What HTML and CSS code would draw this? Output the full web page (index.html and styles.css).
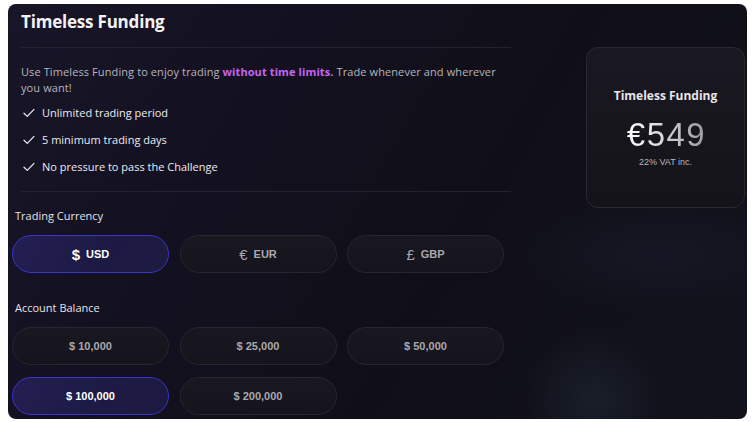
FILE: index.html
```html
<!DOCTYPE html>
<html lang="en">
<head>
<meta charset="utf-8">
<title>Timeless Funding</title>
<link rel="stylesheet" href="styles.css">
</head>
<body>
<div class="panel">
  <div class="left">
    <div class="intro">
      <h1 class="title">Timeless Funding</h1>
      <div class="divider"></div>
      <p class="desc">Use Timeless Funding to enjoy trading <strong class="hl">without time limits.</strong> Trade whenever and wherever you want!</p>
      <ul class="checks">
        <li><svg class="tick" viewBox="0 0 12 10" width="12" height="10"><path d="M1 5.2 L4.3 8.4 L11 1.4" fill="none" stroke="#e6e6ea" stroke-width="1.3" stroke-linecap="round" stroke-linejoin="round"/></svg>Unlimited trading period</li>
        <li><svg class="tick" viewBox="0 0 12 10" width="12" height="10"><path d="M1 5.2 L4.3 8.4 L11 1.4" fill="none" stroke="#e6e6ea" stroke-width="1.3" stroke-linecap="round" stroke-linejoin="round"/></svg>5 minimum trading days</li>
        <li><svg class="tick" viewBox="0 0 12 10" width="12" height="10"><path d="M1 5.2 L4.3 8.4 L11 1.4" fill="none" stroke="#e6e6ea" stroke-width="1.3" stroke-linecap="round" stroke-linejoin="round"/></svg>No pressure to pass the Challenge</li>
      </ul>
      <div class="divider divider-low"></div>
    </div>
    <div class="label">Trading Currency</div>
    <div class="opts">
      <div class="opt sel"><span class="sym">$</span>USD</div>
      <div class="opt"><span class="sym">€</span>EUR</div>
      <div class="opt"><span class="sym">£</span>GBP</div>
    </div>
    <div class="label label-gap">Account Balance</div>
    <div class="opts">
      <div class="opt">$ 10,000</div>
      <div class="opt">$ 25,000</div>
      <div class="opt">$ 50,000</div>
      <div class="opt sel">$ 100,000</div>
      <div class="opt">$ 200,000</div>
    </div>
  </div>
  <div class="right">
    <div class="card">
      <div class="card-title">Timeless Funding</div>
      <div class="price">€549</div>
      <div class="vat">22% VAT inc.</div>
    </div>
  </div>
</div>
</body>
</html>
```
FILE: styles.css
```css
* { box-sizing: border-box; }
html, body { margin: 0; padding: 0; }
body {
  background: #ffffff;
  width: 753px;
  height: 422px;
  padding: 4px 6px 3px 8px;
  font-family: "Open Sans", "Noto Sans", sans-serif;
  overflow: hidden;
}
.panel {
  width: 739px;
  height: 415px;
  border-radius: 8px;
  display: flex;
  overflow: hidden;
  background:
    radial-gradient(circle at 585px 395px, rgba(32,42,56,0.55) 0, rgba(32,42,56,0) 70px),
    radial-gradient(ellipse at 650px 250px, rgba(22,26,40,0.7) 0, rgba(22,26,40,0) 150px),
    linear-gradient(120deg, #181528 0%, #131120 30%, #100f17 60%, #11121c 100%);
}
.left {
  width: 503px;
  padding: 6px 0 0 4px;
  display: flex;
  flex-direction: column;
}
.intro {
  padding-left: 9px;
  width: 499px;
}
.title {
  margin: 0;
  font-size: 17px;
  line-height: 24px;
  font-weight: 700;
  color: #f3f3f5;
  letter-spacing: -0.2px;
}
.divider {
  height: 1px;
  background: #24222d;
  margin-top: 13px;
}
.divider-low { margin-top: 16px; }
.desc {
  margin: 16px 0 0 0;
  font-size: 11px;
  line-height: 16px;
  color: #b7b5bf;
  padding-right: 4px;
  letter-spacing: 0.1px;
}
.hl {
  display: inline-block;
  color: #c465f2;
  font-weight: 700;
}
.checks {
  list-style: none;
  margin: 9px 0 0 0;
  padding: 0;
  display: flex;
  flex-direction: column;
  gap: 11px;
}
.checks li {
  display: flex;
  align-items: center;
  font-size: 11px;
  line-height: 16px;
  color: #ecebef;
  padding-left: 2px;
}
.tick { margin-right: 7px; flex: none; }
.label {
  margin-top: 16px;
  font-size: 11px;
  line-height: 16px;
  color: #e4e3e8;
  padding-left: 3px;
}
.label-gap { margin-top: 27px; }
.opts {
  margin-top: 11px;
  display: grid;
  grid-template-columns: repeat(3, 157px);
  grid-auto-rows: 38px;
  column-gap: 10.5px;
  row-gap: 12px;
}
.opt {
  height: 38px;
  border-radius: 19px;
  border: 1px solid #27252e;
  background: linear-gradient(180deg, #19171f 0%, #15131b 100%);
  display: flex;
  align-items: center;
  justify-content: center;
  font-family: "Liberation Sans", Arial, sans-serif;
  font-weight: 700;
  font-size: 11px;
  color: #a9a8af;
}
.opt.sel {
  background: linear-gradient(120deg, #231f52 0%, #1c1a44 60%, #1d1b40 100%);
  border-color: #3a34c8;
  color: #ffffff;
}
.sym {
  font-size: 15px;
  font-weight: 400;
  margin-right: 6px;
  line-height: 1;
}
.opt.sel .sym { font-weight: 700; }
.right {
  flex: 1;
  padding: 43px 2px 0 0;
  display: flex;
  justify-content: flex-end;
  align-items: flex-start;
}
.card {
  width: 159px;
  height: 161px;
  border-radius: 12px;
  border: 1px solid #2a2831;
  background: linear-gradient(180deg, #1a1820 0%, #15131a 100%);
  display: flex;
  flex-direction: column;
  align-items: center;
  padding-top: 40px;
}
.card-title {
  font-size: 12px;
  line-height: 16px;
  font-weight: 700;
  color: #e6e5ea;
}
.price {
  margin-top: 14px;
  font-family: "Liberation Sans", Arial, sans-serif;
  font-size: 33px;
  line-height: 34px;
  background: linear-gradient(90deg, #ffffff 0%, #e4e4e6 35%, #9a999e 100%);
  -webkit-background-clip: text;
  background-clip: text;
  color: transparent;
  letter-spacing: 1.5px;
  padding-left: 2px;
}
.vat {
  margin-top: 5px;
  font-family: "Liberation Sans", Arial, sans-serif;
  font-size: 9px;
  line-height: 11px;
  color: #b9b8bd;
}
```
